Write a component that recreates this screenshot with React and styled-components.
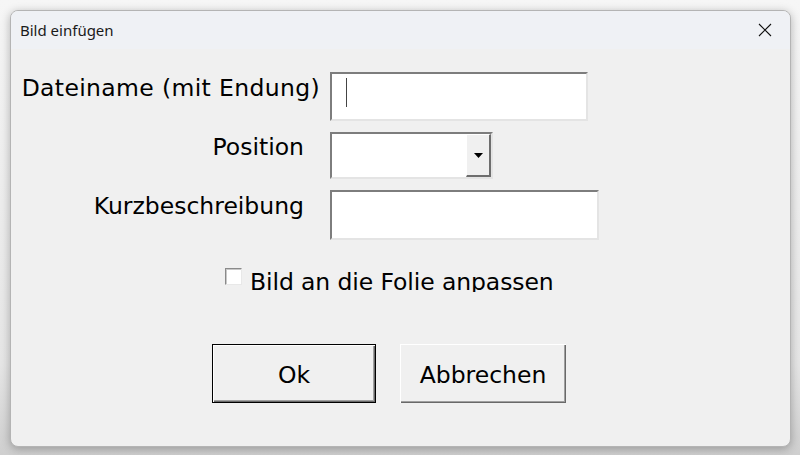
import React from 'react';
import styled, { createGlobalStyle } from 'styled-components';

const GlobalStyle = createGlobalStyle`
  html, body {
    margin: 0;
    padding: 0;
    background: #ececec;
  }
  * {
    box-sizing: border-box;
  }
`;

const Screen = styled.div`
  width: 800px;
  height: 455px;
  padding: 10px 9px 8px 10px;
  background: linear-gradient(to bottom, #f6f6f6 0%, #e6e6e6 80%, #cfcfcf 100%);
  overflow: hidden;
`;

const Window = styled.div`
  width: 781px;
  height: 437px;
  display: flex;
  flex-direction: column;
  background: #f0f0f0;
  border: 1px solid #b4b4b4;
  border-radius: 8px;
  overflow: hidden;
  box-shadow: 0 2px 10px rgba(0, 0, 0, 0.28);
`;

const TitleBar = styled.div`
  height: 38px;
  flex-shrink: 0;
  display: flex;
  align-items: center;
  justify-content: space-between;
  padding: 0 0 0 9px;
  background: #eff1f5;
  font-family: "Noto Sans", "Open Sans", sans-serif;
  font-size: 15px;
  color: #1a1a1a;
`;

const CloseButton = styled.div`
  width: 46px;
  height: 38px;
  display: flex;
  align-items: center;
  justify-content: center;
  margin-right: 2px;
`;

const Body = styled.div`
  flex: 1;
  padding-top: 23px;
  font-family: "DejaVu Sans", Verdana, sans-serif;
  font-size: 23.5px;
  color: #000;
`;

const FormGrid = styled.div`
  display: grid;
  grid-template-columns: 309px auto;
  column-gap: 10px;
  row-gap: 11px;
  align-items: start;
`;

const Label = styled.div`
  justify-self: end;
  padding-right: ${(p) => p.$pad || 0}px;
  padding-top: ${(p) => p.$top || 0}px;
  white-space: nowrap;
  line-height: 27px;
  letter-spacing: ${(p) => p.$spacing || 0}px;
`;

const Sunken = styled.div`
  position: relative;
  width: ${(p) => p.$w}px;
  height: ${(p) => p.$h}px;
  background: #fff;
  border-style: solid;
  border-width: 2px;
  border-color: #7d7d7d #e4e4e4 #e4e4e4 #7d7d7d;
  display: flex;
`;

const Caret = styled.span`
  width: 1px;
  height: 29px;
  background: #444;
  margin: 4px 0 0 14px;
`;

const ComboField = styled.div`
  flex: 1;
`;

const DropButton = styled.div`
  width: 25px;
  height: 100%;
  background: #f0f0f0;
  border-style: solid;
  border-width: 1px 2px 2px 1px;
  border-color: #ffffff #6e6e6e #6e6e6e #ffffff;
  display: flex;
  align-items: center;
  justify-content: center;
`;

const CheckRow = styled.div`
  display: flex;
  align-items: flex-start;
  margin: 27px 0 0 214px;
  height: 25px;
  overflow: hidden;
`;

const CheckBox = styled.span`
  flex-shrink: 0;
  width: 17px;
  height: 17px;
  margin-top: 1px;
  margin-right: 8px;
  background: #fff;
  border-style: solid;
  border-width: 1px;
  border-color: #8a8a8a #e8e8e8 #e8e8e8 #8a8a8a;
  box-shadow: inset 1px 1px 0 #c8c8c8;
`;

const CheckLabel = styled.span`
  line-height: 27px;
  padding-top: 2px;
  letter-spacing: -0.1px;
`;

const ButtonRow = styled.div`
  display: flex;
  gap: 24px;
  margin: 52px 0 0 201px;
`;

const DialogButton = styled.div`
  width: ${(p) => p.$w}px;
  height: 59px;
  display: flex;
  align-items: center;
  justify-content: center;
  background: #f0f0f0;
  border: ${(p) => (p.$default ? '1px solid #000' : '0')};
  box-shadow: inset 1px 1px 0 #fff, inset -1px -1px 0 #696969, inset -2px -2px 0 #a0a0a0;
  padding-top: 2px;
`;

export default function App() {
  return (
    <>
      <GlobalStyle />
      <Screen>
        <Window>
          <TitleBar>
            <span>Bild einfügen</span>
            <CloseButton>
              <svg width="14" height="14" viewBox="0 0 14 14">
                <path d="M1 1 L13 13 M13 1 L1 13" stroke="#111" strokeWidth="1.1" fill="none" />
              </svg>
            </CloseButton>
          </TitleBar>
          <Body>
            <FormGrid>
              <Label $top={3} $spacing={0.35}>Dateiname (mit Endung)</Label>
              <Sunken $w={258} $h={49}>
                <Caret />
              </Sunken>
              <Label $pad={16} $top={2}>Position</Label>
              <Sunken $w={163} $h={47}>
                <ComboField />
                <DropButton>
                  <svg width="9" height="5" viewBox="0 0 9 5">
                    <path d="M0 0 H9 L4.5 5 Z" fill="#000" />
                  </svg>
                </DropButton>
              </Sunken>
              <Label $pad={16} $top={3}>Kurzbeschreibung</Label>
              <Sunken $w={269} $h={50} />
            </FormGrid>
            <CheckRow>
              <CheckBox />
              <CheckLabel>Bild an die Folie anpassen</CheckLabel>
            </CheckRow>
            <ButtonRow>
              <DialogButton $w={164} $default>Ok</DialogButton>
              <DialogButton $w={166}>Abbrechen</DialogButton>
            </ButtonRow>
          </Body>
        </Window>
      </Screen>
    </>
  );
}
